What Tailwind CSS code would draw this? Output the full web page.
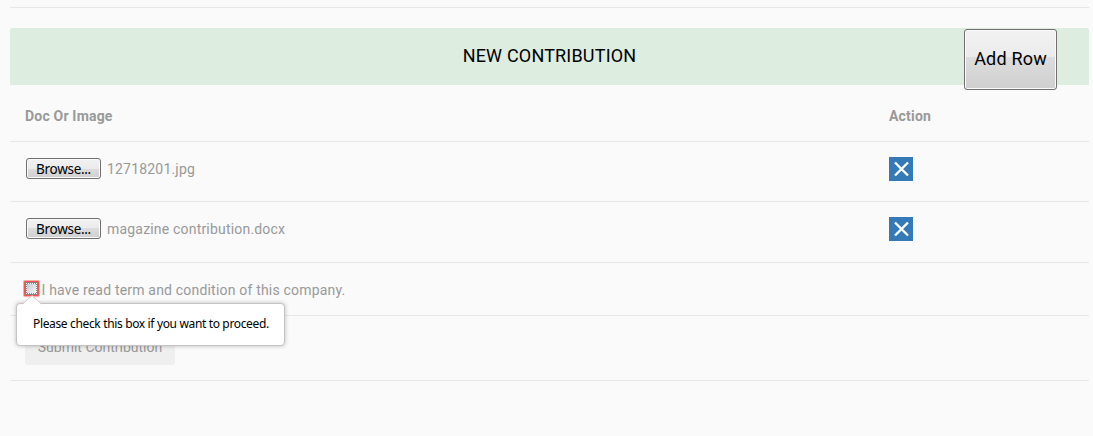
<!DOCTYPE html>
<html lang="en">
<head>
<meta charset="utf-8">
<title>New Contribution</title>
<script src="https://cdn.jsdelivr.net/npm/@tailwindcss/browser@4"></script>
</head>
<body class="h-[436px] overflow-hidden bg-[#fafafa] font-['Roboto',sans-serif] text-sm tracking-[0.19px] text-[#999]">
<main class="ml-[10px] w-[1079px]">
  <div class="h-2 border-b border-[#e7e7e7]"></div>
  <header class="relative mt-5 flex h-[57px] justify-center rounded-t-[2px] bg-[#ddede0] pt-[14px]">
    <h1 class="text-lg leading-7 text-black"><span>NEW CONTRIBUTION</span></h1>
    <button class="absolute left-[954px] top-[1px] h-[61px] w-[93px] rounded-[3px] border border-[#707070] bg-[linear-gradient(#f2f2f2,#ebebeb_46%,#dddddd_46%,#cfcfcf)] pb-px text-lg whitespace-nowrap text-black shadow-[inset_0_0_0_1px_#fafafa]">Add Row</button>
  </header>
  <div class="flex h-[57px] border-b border-[#e7e7e7] px-[15px] pt-[21px] font-bold leading-5">
    <div class="w-[864px]"><span>Doc Or Image</span></div>
    <div><span>Action</span></div>
  </div>
  <div class="flex h-[60px] border-b border-[#e7e7e7] px-[15px] pt-[15px]">
    <div class="flex w-[864px] pl-px">
      <button class="mt-px mr-[6px] h-[21px] w-[75px] rounded-[3px] border border-[#707070] bg-[linear-gradient(#f2f2f2,#ebebeb_50%,#dddddd_50%,#cfcfcf)] font-['Noto_Sans',sans-serif] text-[13.5px] leading-[18px] tracking-[-0.3px] text-black shadow-[inset_0_0_0_1px_#fafafa]">Browse...</button>
      <span class="pt-[2px] leading-5">12718201.jpg</span>
    </div>
    <button class="size-6 bg-[#337ab7]" aria-label="Remove"><svg class="size-6" viewBox="0 0 24 24" fill="none" stroke="#fff" stroke-width="2.4"><path d="M6 5.500 19 18.500M19 5.500 6 18.500"/></svg></button>
  </div>
  <div class="flex h-[61px] border-b border-[#e7e7e7] px-[15px] pt-[15px]">
    <div class="flex w-[864px] pl-px">
      <button class="mt-px mr-[6px] h-[21px] w-[75px] rounded-[3px] border border-[#707070] bg-[linear-gradient(#f2f2f2,#ebebeb_50%,#dddddd_50%,#cfcfcf)] font-['Noto_Sans',sans-serif] text-[13.5px] leading-[18px] tracking-[-0.3px] text-black shadow-[inset_0_0_0_1px_#fafafa]">Browse...</button>
      <span class="pt-[2px] leading-5">magazine contribution.docx</span>
    </div>
    <button class="size-6 bg-[#337ab7]" aria-label="Remove"><svg class="size-6" viewBox="0 0 24 24" fill="none" stroke="#fff" stroke-width="2.4"><path d="M6 5.500 19 18.500M19 5.500 6 18.500"/></svg></button>
  </div>
  <div class="relative flex h-[53px] border-b border-[#e7e7e7] px-[15px] pt-[17px]">
    <svg class="-ml-1 mt-[-1px] h-5 w-5 shrink-0" viewBox="0 0 20 20">
      <defs><linearGradient id="cb" x1="0" y1="0" x2="1" y2="1"><stop offset="0" stop-color="#c3c7cf"/><stop offset="1" stop-color="#f6f6f6"/></linearGradient></defs>
      <rect x="2" y="1" width="17" height="17" rx="2" fill="#ff5a5a" fill-opacity=".5"/>
      <rect x="3" y="2" width="15" height="15" rx="1" fill="#f9524f"/>
      <rect x="4" y="3" width="13" height="13" fill="#858585"/>
      <rect x="6" y="5" width="9" height="9" fill="url(#cb)"/>
      <path d="M5 4.500h11M5 14.500h11M5.500 4v11M15.500 4v11" fill="none" stroke="#fff" stroke-dasharray="1 1"/>
    </svg>
    <span class="ml-[0.5px] leading-5">I have read term and condition of this company.</span>
    <div class="absolute left-[6px] top-[40px] z-10 h-[43px] w-[269px] rounded-[4px] border border-[#c4c4c4] bg-white pl-4 text-black shadow-[0_0_4px_rgba(0,0,0,0.25)]">
      <svg class="absolute left-[5px] top-[-9px] h-[10px] w-5" viewBox="0 0 20 10"><path d="M.5 9.500 10 .5l9.500 9V10H.5z" fill="#fff"/><path d="M.5 9 10 .5 19.500 9" fill="none" stroke="#ccc"/></svg>
      <span class="font-['Noto_Sans',sans-serif] text-[12px] leading-[40px] tracking-[-0.35px] whitespace-nowrap">Please check this box if you want to proceed.</span>
    </div>
  </div>
  <div class="h-[65px] border-b border-[#e7e7e7] px-[15px] pt-[14px]">
    <button class="h-[35px] w-[150px] rounded-[3px] bg-[#efefef] pb-[2px] tracking-normal whitespace-nowrap"><span>Submit Contribution</span></button>
  </div>
</main>
</body>
</html>
